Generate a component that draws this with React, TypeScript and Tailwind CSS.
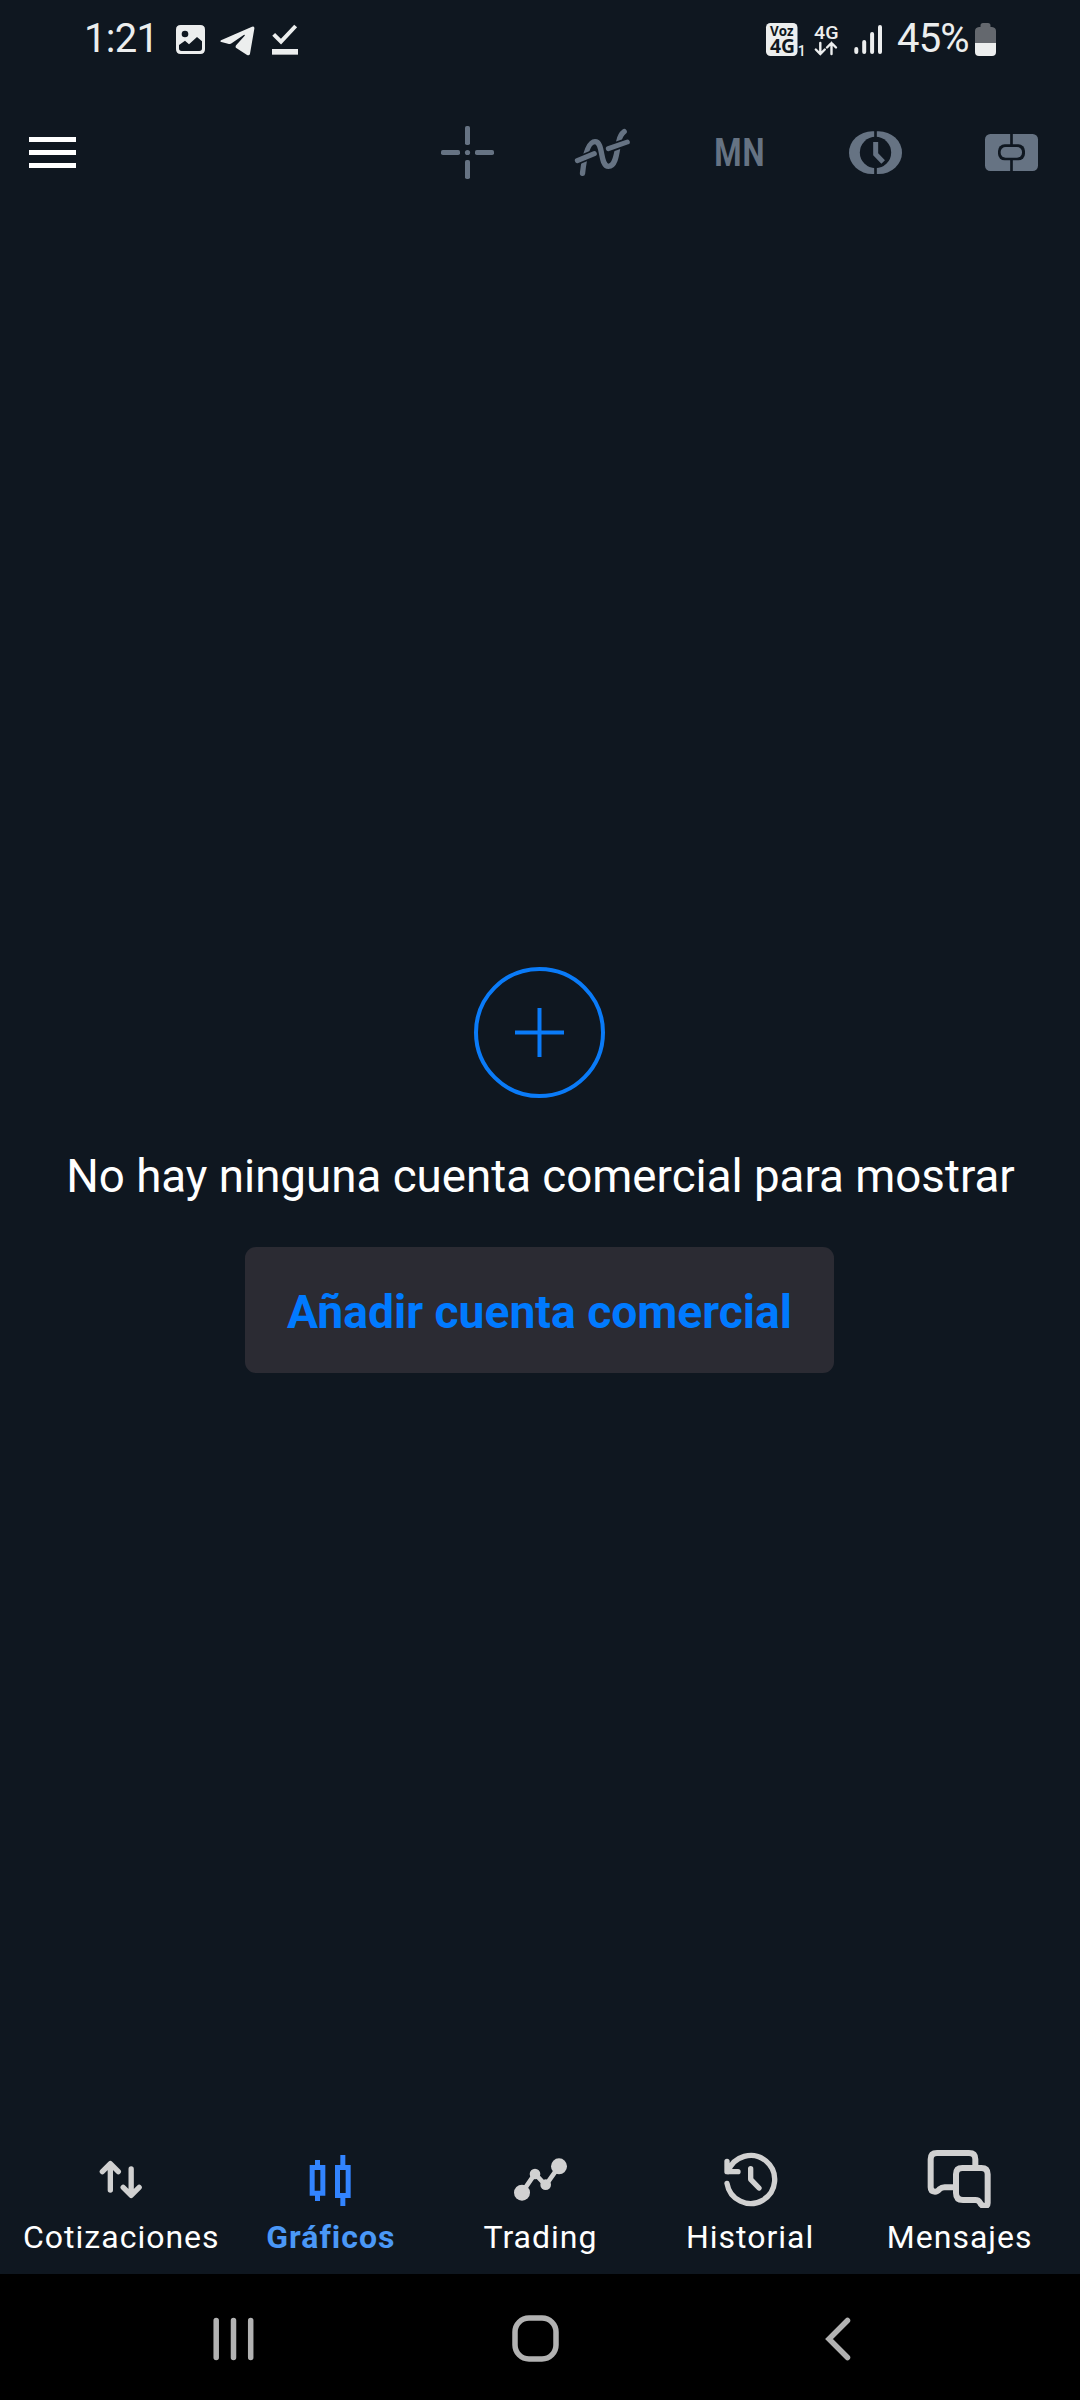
import { ReactNode } from 'react';
import clsx from 'clsx';

interface TabItem {
    label: string;
    icon: ReactNode;
    active?: boolean;
}

function StatusBar() {
    return (
        <div className="flex h-[77px] items-center justify-between pr-[84px] pl-[84px] text-[40px] leading-none text-[#eceeee]">
            <div className="flex items-center">
                <span className="mt-px w-[76px] tracking-[-0.7px]">1:21</span>
                <svg className="mt-0.5 ml-4 h-[29px] w-[29px]" viewBox="0 0 87 87">
                    <path
                        fill="currentColor"
                        fillRule="evenodd"
                        d="M14 0H73Q87 0 87 14V73Q87 87 73 87H14Q0 87 0 73V14Q0 0 14 0ZM27 17A10 10 0 1 0 27 37A10 10 0 1 0 27 17ZM9 60V70Q9 78 17 78H70Q78 78 78 70V49L63 36L39 58L27 47Z"
                    />
                </svg>
                <svg className="mt-1 ml-[15px] h-[30px] w-[35px]" viewBox="0 0 105 90">
                    <path
                        fill="currentColor"
                        d="M3 43L96 2Q104 -1 103 8L90 83Q88 91 80 86L50 67Q44 63 49 57L74 29Q76 25 71 27L36 51Q31 55 24 53L4 48Q-1 46 3 43Z"
                    />
                </svg>
                <svg className="mt-0.5 ml-[17px] h-[32px] w-[26px]" viewBox="0 0 78 96">
                    <path fill="none" stroke="currentColor" strokeWidth="12" d="M5 31L27 53L71 6" />
                    <path fill="currentColor" d="M0 75H78V92H0Z" />
                </svg>
            </div>

            <div className="flex items-center">
                <svg className="mt-0.5 h-[33px] w-[39px] overflow-visible" viewBox="0 0 39 33">
                    <rect width="31.5" height="33" rx="4.5" fill="currentColor" />
                    <g fill="#0f1720" fontFamily="Open Sans, sans-serif" fontWeight="700">
                        <text x="4" y="13.4" fontSize="14" textLength="23.5" lengthAdjust="spacingAndGlyphs">
                            Voz
                        </text>
                        <text x="4" y="30" fontSize="19" textLength="25" lengthAdjust="spacingAndGlyphs">
                            4G
                        </text>
                    </g>
                    <text x="31.8" y="32.5" fontSize="14" fontWeight="500" fill="currentColor">
                        1
                    </text>
                </svg>
                <svg className="mt-0.5 ml-[9px] h-[33px] w-[26px] overflow-visible" viewBox="0 0 26 33">
                    <text
                        x="0"
                        y="15.5"
                        fontSize="19"
                        fontWeight="500"
                        textLength="24.5"
                        lengthAdjust="spacingAndGlyphs"
                        fill="currentColor"
                    >
                        4G
                    </text>
                    <path
                        fill="none"
                        stroke="currentColor"
                        strokeWidth="2.4"
                        strokeLinecap="round"
                        d="M6.300 20V31M1.800 26.500L6.300 31L10.800 26.500M17.500 31V20M13 24.500L17.500 20L22 24.500"
                    />
                </svg>
                <svg className="mt-0.5 ml-[14px] h-[31px] w-[29px]" viewBox="0 0 29 31">
                    <path
                        fill="none"
                        stroke="currentColor"
                        strokeWidth="4"
                        strokeLinecap="round"
                        d="M2.300 25V28M10.200 18V28M18.100 10V28M26 3V28"
                    />
                </svg>
                <span className="mt-px ml-[14px] w-[78px] tracking-[-0.8px]">45%</span>
                <svg className="mt-0.5 h-[33px] w-[21px]" viewBox="0 0 21 33">
                    <path fill="#64686e" d="M5.500 2.500Q5.500 0 8 0H13Q15.500 0 15.500 2.500V4H17Q21 4.500 21 8V20H0V8Q0 4.500 4 4H5.500Z" />
                    <path fill="currentColor" d="M0 20H21V29Q21 33 17 33H4Q0 33 0 29Z" />
                </svg>
            </div>
        </div>
    );
}

function Toolbar() {
    return (
        <header className="flex h-[150px] items-center justify-between pr-[1px] pl-[29px] text-[#667383]">
            <div className="flex flex-col gap-2">
                <span className="h-[5px] w-[47px] bg-white" />
                <span className="h-[5px] w-[47px] bg-white" />
                <span className="h-[5px] w-[47px] bg-white" />
            </div>

            <div className="flex items-center">
                <div className="flex w-[136px] justify-center">
                    <svg className="h-[60px] w-[60px]" viewBox="0 0 60 60">
                        <g fill="currentColor">
                            <rect x="4" y="28" width="19" height="5" rx="1.800" />
                            <rect x="38" y="28" width="19" height="5" rx="1.800" />
                            <rect x="28" y="4" width="5" height="19" rx="1.800" />
                            <rect x="28" y="38" width="5" height="19" rx="1.800" />
                            <circle cx="30.500" cy="30.500" r="2.600" />
                        </g>
                    </svg>
                </div>
                <div className="flex w-[136px] justify-center">
                    <svg className="h-[60px] w-[60px]" viewBox="-1.5 0 180 180" fill="none" strokeLinecap="round">
                        <path
                            stroke="currentColor"
                            strokeWidth="16"
                            d="M27 154C32 110 42 59 64.500 59C91 59 78 133 105 133C128 133 130 88 136 58Q140 38 152 29"
                        />
                        <path stroke="#0f1720" strokeWidth="25" strokeLinecap="butt" d="M8 117.500L68 92.800M98 82.500L166 58.500" />
                        <path stroke="currentColor" strokeWidth="15" d="M11.500 116L62.500 95M104.500 80L161.500 60" />
                    </svg>
                </div>
                <div className="flex w-[136px] justify-center">
                    <span className="mt-0.5 ml-0.5 scale-x-[0.8] text-[39px] leading-none font-bold tracking-[1px]">MN</span>
                </div>
                <div className="flex w-[136px] justify-center">
                    <svg className="h-[60px] w-[60px]" viewBox="-1.5 0 180 180">
                        <rect x="10.500" y="28" width="159" height="128" rx="70" ry="64" fill="currentColor" />
                        <path fill="#0f1720" d="M86 26H94V158H86Z" />
                        <circle cx="90" cy="91.500" r="47" fill="#0f1720" />
                        <path fill="none" stroke="currentColor" strokeWidth="15" d="M90.500 60V97L113 120" />
                    </svg>
                </div>
                <div className="flex w-[136px] justify-center">
                    <svg className="h-[60px] w-[60px]" viewBox="-1.5 0 180 180">
                        <rect x="10.500" y="36" width="159" height="111" rx="16" fill="currentColor" />
                        <path fill="#0f1720" d="M86 34H94V149H86Z" />
                        <rect x="49.500" y="67" width="81" height="48" rx="20" fill="#0f1720" />
                        <rect x="57.500" y="75" width="64" height="32" rx="15" fill="currentColor" />
                    </svg>
                </div>
            </div>
        </header>
    );
}

const tabs: TabItem[] = [
    {
        label: 'Cotizaciones',
        icon: (
            <path
                strokeWidth="16"
                strokeLinecap="round"
                strokeLinejoin="round"
                d="M73 126V48M49 71L73 47L97 71M135.500 63V141M111.500 118L135.500 142L159.500 118"
            />
        ),
    },
    {
        label: 'Gráficos',
        active: true,
        icon: (
            <path
                strokeWidth="15"
                d="M51.500 58.500H83.500V135.500H51.500ZM67.500 36V54M67.500 140V159M127.500 58.500H159.500V142.500H127.500ZM143.500 21V54M143.500 146V174"
            />
        ),
    },
    {
        label: 'Trading',
        icon: (
            <>
                <path strokeWidth="14" d="M51 134L90 77L122 112L162 55" />
                <g fill="currentColor" stroke="none">
                    <circle cx="51" cy="134" r="24" />
                    <circle cx="90" cy="78" r="16" />
                    <circle cx="122" cy="110" r="16" />
                    <circle cx="162" cy="55" r="24" />
                </g>
            </>
        ),
    },
    {
        label: 'Historial',
        icon: (
            <path
                strokeWidth="16"
                strokeLinecap="round"
                strokeLinejoin="round"
                d="M36 106A72 72 0 1 0 39 71M36 40V71H69M107 62V94L132 120"
            />
        ),
    },
    {
        label: 'Mensajes',
        icon: (
            <path
                strokeWidth="18"
                d="M154 54V34Q154 15 135 15H39Q20 15 20 34V118Q20 131 33 131Q40 131 46 124Q53 118 62 118H94M96 79Q96 60 115 60H172Q191 60 191 79V165Q191 174 182 174Q172 174 168 164Q164 156 154 156H117Q96 156 96 135Z"
            />
        ),
    },
];

function TabBar() {
    return (
        <nav className="flex px-4 pb-[17px]">
            {tabs.map((tab) => (
                <div key={tab.label} className="flex flex-1 basis-0 flex-col items-center">
                    <svg
                        className={clsx('h-[60px] w-[70px]', tab.active ? 'text-[#3284ff]' : 'text-[#d1d1d1]')}
                        viewBox="0 0 210 180"
                        fill="none"
                        stroke="currentColor"
                    >
                        {tab.icon}
                    </svg>
                    <span
                        className={clsx(
                            'mt-[9px] pl-px text-[32px] leading-[40px] tracking-[1px] whitespace-nowrap',
                            tab.active ? 'font-bold text-[#4a98f7]' : 'text-white',
                        )}
                    >
                        {tab.label}
                    </span>
                </div>
            ))}
        </nav>
    );
}

function SystemNav() {
    return (
        <div className="flex h-[126px] items-center bg-black pt-[3px] pl-[213px] text-[#b2b2b2]">
            <svg className="h-[44px] w-[41px]" viewBox="0 0 41 44">
                <path fill="none" stroke="currentColor" strokeWidth="5.500" strokeLinecap="round" d="M3.200 3.500V40.500M20.500 3.500V40.500M37.700 3.500V40.500" />
            </svg>
            <svg className="ml-[258px] h-[47px] w-[47px]" viewBox="0 0 47 47">
                <rect x="3" y="3" width="41" height="41" rx="14" fill="none" stroke="currentColor" strokeWidth="5.500" />
            </svg>
            <svg className="ml-[266px] h-[44px] w-[26px]" viewBox="0 0 26 44">
                <path fill="none" stroke="currentColor" strokeWidth="5.500" strokeLinecap="round" d="M22.500 3.500L4 22L22.500 40.500" />
            </svg>
        </div>
    );
}

export default function App() {
    return (
        <div className="flex h-[2400px] w-[1080px] flex-col overflow-hidden bg-[#0f1720] font-[Roboto,sans-serif]">
            <StatusBar />
            <Toolbar />

            <main className="flex flex-1 flex-col items-center pt-[740px] pr-px">
                <svg className="h-[131px] w-[131px] text-[#0a7bf8]" viewBox="0 0 131 131" fill="none" stroke="currentColor">
                    <circle cx="65.500" cy="65.500" r="63.500" strokeWidth="4" />
                    <path strokeWidth="4" d="M41 65.500H90M65.500 41V90" />
                </svg>
                <p className="mt-[52px] pl-0.5 text-[45.7px] leading-[54px] whitespace-nowrap text-white">
                    No hay ninguna cuenta comercial para mostrar
                </p>
                <button
                    type="button"
                    className="mt-[43px] h-[126px] w-[589px] rounded-[11px] bg-[#2b2b33] pt-1 text-[46.2px] leading-none font-bold whitespace-nowrap text-[#007aff]"
                >
                    Añadir cuenta comercial
                </button>
            </main>

            <TabBar />
            <SystemNav />
        </div>
    );
}
